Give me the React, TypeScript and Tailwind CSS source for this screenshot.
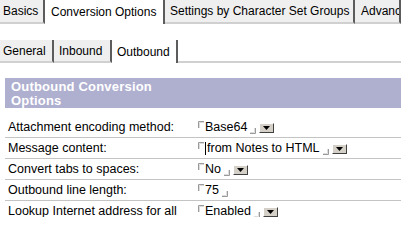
import React from "react";

function TopTab({ label, selected, className }: { label: string; selected?: boolean; className: string }) {
  return (
    <div
      className={
        selected
          ? `h-full flex items-center bg-white border-r-2 border-r-[#5c5c5c] whitespace-nowrap overflow-hidden ${className}`
          : `h-full flex items-center bg-[#efefef] border-r-2 border-r-[#5c5c5c] border-b-2 border-b-[#d0d0d0] whitespace-nowrap overflow-hidden ${className}`
      }
    >
      {label}
    </div>
  );
}

function OpenCorner() {
  return (
    <svg width="6" height="7" viewBox="0 0 6 7" className="shrink-0 self-start mt-[1px]">
      <path d="M0.5 7V0.5H6" fill="none" stroke="#9a9a9a" strokeWidth="1" />
      <path d="M1.5 7V1.5H6" fill="none" stroke="#dcdcdc" strokeWidth="1" />
    </svg>
  );
}

function CloseCorner() {
  return (
    <svg width="6" height="6" viewBox="0 0 6 6" className="shrink-0 self-end mb-[3px] ml-[3px]">
      <path d="M5.5 0V5.5H0" fill="none" stroke="#9a9a9a" strokeWidth="1" />
      <path d="M4.5 0V4.5H0" fill="none" stroke="#dcdcdc" strokeWidth="1" />
    </svg>
  );
}

function DropButton() {
  return (
    <div className="shrink-0 ml-[3px] mt-[3px] w-[15px] h-[10px] bg-[#d4d0c8] border border-t-white border-l-white border-r-[#404040] border-b-[#404040] flex items-center justify-center">
      <svg width="7" height="4" viewBox="0 0 7 4">
        <path d="M0 0H7L3.5 4Z" fill="#000" />
      </svg>
    </div>
  );
}

function Row({
  label,
  value,
  drop,
  cursor,
  last,
}: {
  label: string;
  value: string;
  drop?: boolean;
  cursor?: boolean;
  last?: boolean;
}) {
  return (
    <div className={last ? "flex ml-[5px]" : "flex h-[21px] ml-[5px] border-b border-b-[#c4c4c4]"}>
      <div
        className={
          last
            ? "w-[193px] shrink-0 pl-[3px] pt-[3px] leading-[14px]"
            : "w-[193px] shrink-0 pl-[3px] leading-[20px] whitespace-nowrap"
        }
      >
        {label}
      </div>
      <div className="flex items-start h-[20px] pt-[3px] whitespace-nowrap">
        <OpenCorner />
        <div className="flex items-center h-[14px] ml-[1px]">
          {cursor && <span className="inline-block w-[1px] h-[13px] bg-black mr-[1px]" />}
          <span className="leading-[14px]">{value}</span>
        </div>
        <CloseCorner />
        {drop && <DropButton />}
      </div>
    </div>
  );
}

export default function App() {
  return (
    <div className="w-[401px] h-[217px] overflow-hidden bg-white text-black font-['Liberation_Sans',Arial,sans-serif]">
      <div className="flex h-[24px] text-[12px]">
        <TopTab label="Basics" className="w-[45px] pl-[3px]" />
        <TopTab label="Conversion Options" selected className="w-[120px] pl-[6px]" />
        <TopTab label="Settings by Character Set Groups" className="w-[190px] pl-[5px]" />
        <TopTab label="Advanced" className="flex-1 pl-[6px]" />
      </div>
      <div className="h-[16px]" />
      <div className="flex h-[23px] text-[12px]">
        <TopTab label="General" className="w-[54px] pl-[3px]" />
        <TopTab label="Inbound" className="w-[58px] pl-[5px]" />
        <TopTab label="Outbound" selected className="w-[66px] pl-[5px]" />
        <div className="flex-1 h-full border-b-2 border-b-[#d0d0d0]" />
      </div>
      <div className="h-[15px]" />
      <div className="ml-[5px] h-[30px] bg-[#afafcf] text-white font-bold text-[13px] leading-[14px] pt-[2px] pl-[6px] tracking-[0.2px]">
        <div className="w-[170px]">Outbound Conversion Options</div>
      </div>
      <div className="h-[9px]" />
      <div className="text-[12.5px]">
        <Row label="Attachment encoding method:" value="Base64" drop />
        <Row label="Message content:" value="from Notes to HTML" drop cursor />
        <Row label="Convert tabs to spaces:" value="No" drop />
        <Row label="Outbound line length:" value="75" />
        <Row label="Lookup Internet address for all Notes addresses" value="Enabled" drop last />
      </div>
    </div>
  );
}
